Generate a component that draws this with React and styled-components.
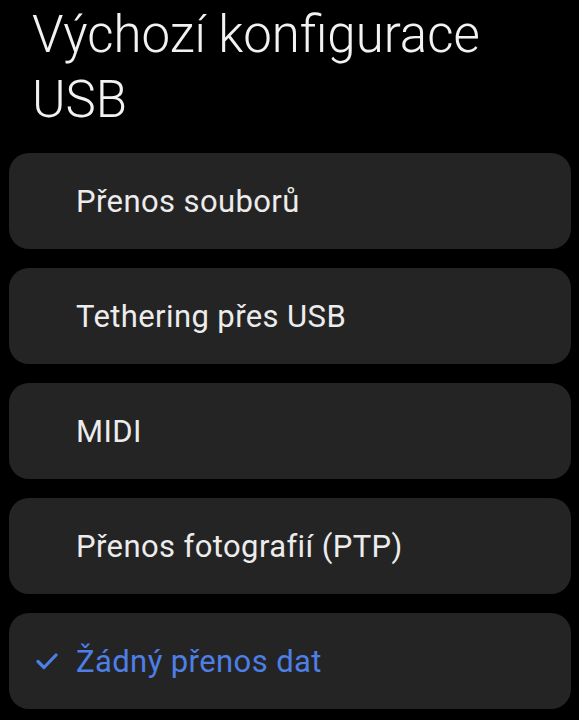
import React from 'react';
import styled, { createGlobalStyle } from 'styled-components';

const GlobalStyle = createGlobalStyle`
  html, body {
    margin: 0;
    padding: 0;
    background: #000;
  }
`;

const Screen = styled.div`
  width: 579px;
  height: 720px;
  overflow: hidden;
  background: #000;
  font-family: Roboto, "Noto Sans", sans-serif;
  display: flex;
  flex-direction: column;
`;

const Title = styled.h1`
  margin: 0;
  padding: 2px 32px 0;
  font-size: 51px;
  font-weight: 300;
  line-height: 65px;
  color: #f2f2f2;
`;

const List = styled.div`
  display: flex;
  flex-direction: column;
  gap: 19px;
  padding: 21px 8px 0 9px;
`;

const Option = styled.div`
  height: 96px;
  border-radius: 20px;
  background: #242424;
  display: flex;
  align-items: center;
  padding-left: 27px;
  color: ${(props) => (props.selected ? '#4d7fe6' : '#ececec')};
  font-size: 31px;
  font-weight: 400;
  letter-spacing: 0.4px;
`;

const CheckSlot = styled.span`
  width: 40px;
  display: flex;
  align-items: center;
`;

const options = [
  'Přenos souborů',
  'Tethering přes USB',
  'MIDI',
  'Přenos fotografií (PTP)',
  'Žádný přenos dat',
];

const selectedIndex = 4;

export default function App() {
  return (
    <Screen>
      <GlobalStyle />
      <Title>
        Výchozí konfigurace
        <br />
        USB
      </Title>
      <List>
        {options.map((label, i) => (
          <Option key={label} selected={i === selectedIndex}>
            <CheckSlot>
              {i === selectedIndex && (
                <svg width="22" height="17" viewBox="0 0 22 17" fill="none">
                  <path d="M2 8.5l6 6L20 2" stroke="#4d7fe6" strokeWidth="3.2" strokeLinecap="round" strokeLinejoin="round" />
                </svg>
              )}
            </CheckSlot>
            {label}
          </Option>
        ))}
      </List>
    </Screen>
  );
}
